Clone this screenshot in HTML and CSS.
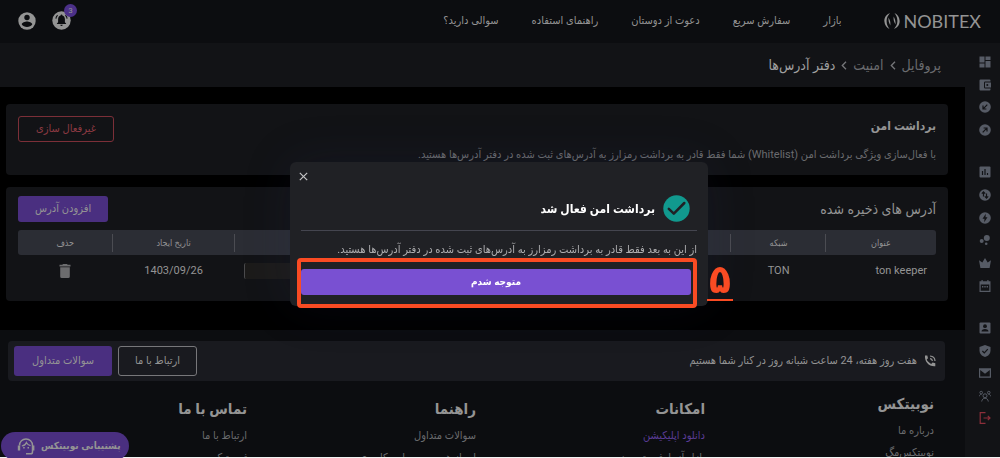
FILE: index.html
```html
<!DOCTYPE html>
<html lang="fa" dir="rtl">
<head>
  <meta charset="UTF-8" />
  <meta name="viewport" content="width=device-width, initial-scale=1.0"/>
  <title>نوبیتکس – دفتر آدرس‌ها</title>
  <link rel="stylesheet" href="styles.css">
</head>
<body>
  <header class="topbar">
    <a href="#" class="logo" dir="ltr">
      <svg width="16" height="16" viewBox="0 0 16 16" fill="currentColor">
        <path d="M6 0C2 1.500 0 5 .4 8.500.7 12 2.500 14.500 5.500 16 3.500 13.500 2.600 11 2.600 8 2.600 5 3.800 2.500 6 0zM4.500 4.500C6 7 6.800 9.500 6.300 12.500 5 10 4.200 7.500 4.500 4.500z"/>
        <path d="M10 16c4-1.500 6-5 5.600-8.500C15.300 4 13.500 1.500 10.500 0c2 2.500 2.900 5 2.900 8 0 3-1.200 5.500-3.400 8zM11.500 11.500C10 9 9.200 6.500 9.700 3.500c1.300 2.500 2.100 5 1.800 8z"/>
      </svg>
      <span>NOBITEX</span>
    </a>
    <nav class="main-nav">
      <a href="#">بازار</a>
      <a href="#">سفارش سریع</a>
      <a href="#">دعوت از دوستان</a>
      <a href="#">راهنمای استفاده</a>
      <a href="#">سوالی دارید؟</a>
    </nav>
    <div class="user-tools">
      <button class="icon-btn" aria-label="اعلان‌ها">
        <svg width="19" height="19" viewBox="0 0 19 19">
          <circle cx="9.500" cy="9.500" r="9.200" fill="#949494"/>
          <path d="M9.500 3.600c.6 0 .9.400.9.900 1.600.5 2.500 1.900 2.500 3.700v3l1.200 1.300v.6H4.900v-.6l1.200-1.300v-3c0-1.800.9-3.200 2.500-3.700 0-.5.3-.9.900-.9zM8.300 13.800h2.400a1.200 1.200 0 0 1-2.400 0z" fill="#0c0d10"/>
          <path d="M5.600 4.200C4.500 5.100 4 6.200 3.900 7.600M13.400 4.200c1.100.9 1.600 2 1.700 3.400" fill="none" stroke="#0c0d10" stroke-width="1.100"/>
        </svg>
        <span class="badge">3</span>
      </button>
      <button class="icon-btn" aria-label="حساب کاربری">
        <svg width="18" height="18" viewBox="0 0 18 18">
          <circle cx="9" cy="9" r="8.700" fill="#949494"/>
          <circle cx="9" cy="5.500" r="2.700" fill="#0c0d10"/>
          <path d="M3.700 12.300c0-1.900 3.500-2.900 5.300-2.900s5.300 1 5.300 2.900c-1.100 1.700-3.100 2.800-5.300 2.800s-4.200-1.100-5.300-2.800z" fill="#0c0d10"/>
        </svg>
      </button>
    </div>
  </header>

  <div class="layout">
    <aside class="sidebar">
      <div class="group short">
        <a href="#" aria-label="داشبورد"><svg viewBox="0 0 12 12"><path d="M.5.500h5v6h-5zM6.500.500h5v3.500h-5zM.5 7.500h5v4h-5zM6.500 5h5v6.500h-5z"/></svg></a>
        <a href="#" aria-label="کیف پول"><svg viewBox="0 0 12 12"><path d="M1.500.500h9q1 0 1 1v1H6.300Q5 2.500 5 3.800v4.400q0 1.300 1.300 1.300h5.200v1q0 1-1 1h-9q-1 0-1-1v-9q0-1 1-1zM6 3.500h6v5H6zM8.300 5a1 1 0 1 0 .01 2 1 1 0 0 0 0-2z" fill-rule="evenodd"/></svg></a>
        <a href="#" aria-label="واریز"><svg viewBox="0 0 12 12"><circle cx="6" cy="6" r="5.800"/><path class="cut" d="M8.300 3.700 4.200 7.800M4 4.600V8h3.400"/></svg></a>
        <a href="#" aria-label="برداشت"><svg viewBox="0 0 12 12"><circle cx="6" cy="6" r="5.800"/><path class="cut" d="M3.700 8.300 7.800 4.200M4.600 4H8v3.400"/></svg></a>
      </div>
      <div class="group long">
        <a href="#" aria-label="بازارها"><svg viewBox="0 0 12 12"><rect x=".5" y=".5" width="11" height="11" rx="1"/><path class="cut" d="M3.500 5v4M6 3v6M8.500 7v2"/></svg></a>
        <a href="#" aria-label="تبدیل"><svg viewBox="0 0 12 12"><circle cx="6" cy="6" r="5.800"/><path class="cut" d="M4.500 7.500V3M2.800 4.600l1.700-1.700 1.700 1.700M7.500 4.500V9M5.800 7.400l1.700 1.700 1.700-1.700"/></svg></a>
        <a href="#" aria-label="معامله سریع"><svg viewBox="0 0 12 12"><circle cx="6" cy="6" r="5.800"/><path d="M6.800 1.800 3.500 6.700h2L5.200 10.200 8.500 5.300h-2z" fill="#121316"/></svg></a>
        <a href="#" aria-label="استیکینگ"><svg viewBox="0 0 12 12"><circle cx="7.800" cy="4" r="3"/><circle cx="2.700" cy="7" r="2"/><circle cx="7.200" cy="9.800" r="1.300"/></svg></a>
        <a href="#" aria-label="سطح کاربری"><svg viewBox="0 0 12 12"><path d="M0 3.200 3.300 5.500 6 1l2.700 4.500L12 3.200 10.600 11H1.400z"/></svg></a>
        <a href="#" aria-label="تقویم"><svg viewBox="0 0 12 12"><path d="M2.500 0h1.200v1.300h4.600V0h1.200v1.300h2V12H.5V1.300h2zM1.700 4.500v6.300h8.600V4.500zM3 6h1.400v1.400H3zM5.300 6h1.400v1.400H5.300zM7.600 6H9v1.400H7.600z" fill-rule="evenodd"/></svg></a>
      </div>
      <div class="group medium">
        <a href="#" aria-label="پروفایل"><svg viewBox="0 0 12 12"><rect x=".5" y=".5" width="11" height="11" rx="1"/><circle cx="6" cy="4.200" r="1.900" fill="#121316"/><path d="M2.500 9.400c0-1.700 2.300-2.400 3.500-2.400s3.500.7 3.500 2.400z" fill="#121316"/></svg></a>
        <a href="#" aria-label="امنیت"><svg viewBox="0 0 12 12"><path d="M6 0l5.500 2v3.500C11.500 8.500 9.300 11.200 6 12 2.700 11.200.500 8.500.500 5.500V2z"/><path class="cut" d="M3.400 6l1.900 1.900 3.500-3.700"/></svg></a>
        <a href="#" aria-label="پیام‌ها"><svg viewBox="0 0 12 12"><path d="M0 1.200h12v9.600H0zM1.200 3v6.600h9.600V3L6 6.800z" fill-rule="evenodd"/><path d="M1.200 2h9.600L6 6z"/></svg></a>
        <a href="#" aria-label="دعوت"><svg viewBox="0 0 12 12"><g fill="none" stroke="#565b65" stroke-width="1"><circle cx="6" cy="5.800" r="2"/><circle cx="2.200" cy="2.600" r="1.300"/><circle cx="9.800" cy="2.600" r="1.300"/><path d="M2.700 11.500c.3-2 1.500-3.300 3.300-3.300s3 1.300 3.300 3.300M.3 6.300c.1-1.200.9-1.900 2.200-1.900M11.700 6.300c-.1-1.200-.9-1.900-2.200-1.900"/></g></svg></a>
        <a href="#" aria-label="خروج"><svg viewBox="0 0 12 12"><path d="M6.500.700H1.200v10.600h5.300M4.500 6h6.500M8.800 3.800 11 6 8.800 8.200" fill="none" stroke="#8c2f3a" stroke-width="1.200"/></svg></a>
      </div>
    </aside>

    <div class="page">
      <nav class="breadcrumb">
        <a href="#">پروفایل</a>
        <svg width="6" height="9" viewBox="0 0 6 9"><path d="M5 .8 1.300 4.500 5 8.200"/></svg>
        <a href="#">امنیت</a>
        <svg width="6" height="9" viewBox="0 0 6 9"><path d="M5 .8 1.300 4.500 5 8.200"/></svg>
        <span class="current">دفتر آدرس‌ها</span>
      </nav>

      <main>
        <section class="card secure">
          <div class="card-head">
            <h2>برداشت امن</h2>
            <button class="btn btn-danger">غیرفعال سازی</button>
          </div>
          <p>با فعال‌سازی ویژگی برداشت امن (Whitelist) شما فقط قادر به برداشت رمزارز به آدرس‌های ثبت شده در دفتر آدرس‌ها هستید.</p>
        </section>

        <section class="card addresses">
          <div class="card-head">
            <h2 class="light">آدرس های ذخیره شده</h2>
            <button class="btn btn-primary">افزودن آدرس</button>
          </div>
          <table>
            <thead>
              <tr>
                <th class="col-title">عنوان</th>
                <th class="col-net">شبکه</th>
                <th aria-label="آدرس"></th>
                <th class="col-date">تاریخ ایجاد</th>
                <th class="col-del">حذف</th>
              </tr>
            </thead>
            <tbody>
              <tr>
                <td class="name">ton keeper</td>
                <td>TON</td>
                <td class="address" dir="ltr"><span class="hidden-address"></span></td>
                <td>1403/09/26</td>
                <td>
                  <button class="icon-btn" aria-label="حذف">
                    <svg width="12" height="14" viewBox="0 0 12 14" fill="#6c6c6e"><path d="M4 0h4l.7.800H11.500v1.700H.500V.800h2.800zM1.200 3.300h9.600V12.500q0 1.500-1.500 1.500H2.700q-1.500 0-1.500-1.500z"/></svg>
                  </button>
                </td>
              </tr>
            </tbody>
          </table>
        </section>
      </main>

      <footer>
        <div class="help-bar">
          <svg width="12" height="12" viewBox="0 0 12 12"><path d="M1 .500h2.300l.7 2.700-1.300 1.300c.9 2 2.500 3.500 4.500 4.400l1.400-1.300 2.700.7V11.300C5 11.900.300 6.500 1 .500z" fill="#949494"/><path d="M6 3.600q2.200.2 2.400 2.400M6 1q4.800.3 5 5" fill="none" stroke="#949494" stroke-width="1.200"/></svg>
          <span>هفت روز هفته، 24 ساعت شبانه روز در کنار شما هستیم</span>
          <div class="help-actions">
            <button class="btn btn-outline">ارتباط با ما</button>
            <button class="btn btn-primary">سوالات متداول</button>
          </div>
        </div>
        <div class="footer-links">
          <div class="about">
            <h3>نوبیتکس</h3>
            <a href="#">درباره ما</a>
            <a href="#">نوبیتکس‌مگ</a>
          </div>
          <div>
            <h3>امکانات</h3>
            <a href="#" class="active">دانلود اپلیکیشن</a>
            <a href="#">بازار آزمایشی تست‌نت</a>
          </div>
          <div>
            <h3>راهنما</h3>
            <a href="#">سوالات متداول</a>
            <a href="#">احراز هویت و سطوح کاربری</a>
          </div>
          <div>
            <h3>تماس با ما</h3>
            <a href="#">ارتباط با ما</a>
            <a href="#">ثبت تیکت</a>
          </div>
        </div>
      </footer>
    </div>
  </div>

  <button class="support">
    <span>پشتیبانی نوبیتکس</span>
    <svg width="18" height="17" viewBox="0 0 18 17" fill="none" stroke="#949494" stroke-width="1.500">
      <path d="M2.500 7.500C2.500 3.500 5.500 1 9 1s6.500 2.500 6.500 6.500V14q0 1.800-1.800 1.800H9"/>
      <path d="M2 7.500v5M16.200 7.500v5" stroke-width="2.400"/>
      <path d="M4.800 8c2.700-.4 4-1.600 4.600-3.500.9 1.800 2.300 2.900 4.200 3.100" stroke-width="1.200"/>
      <path d="M6.200 9.800h1.500M10.500 9.800H12"/>
    </svg>
  </button>

  <div class="overlay">
    <div class="dialog" role="dialog" aria-labelledby="dialogTitle">
      <button class="close" aria-label="بستن">
        <svg width="9" height="9" viewBox="0 0 9 9"><path d="M.8.800l7.400 7.400M8.200.800.800 8.200" stroke="#c4c4c6" stroke-width="1.200"/></svg>
      </button>
      <div class="dialog-head">
        <svg width="27" height="27" viewBox="0 0 27 27"><circle cx="13.500" cy="13.500" r="13.200" fill="#11998e"/><path d="M5.800 13.800l5 4.800L21.300 8" fill="none" stroke="#202125" stroke-width="2.500" stroke-linecap="round" stroke-linejoin="round"/></svg>
        <h2 id="dialogTitle">برداشت امن فعال شد</h2>
      </div>
      <p>از این به بعد فقط قادر به برداشت رمزارز به آدرس‌های ثبت شده در دفتر آدرس‌ها هستید.</p>
      <button class="btn btn-confirm">متوجه شدم</button>
      <div class="marker"></div>
      <div class="step">۵</div>
    </div>
  </div>
</body>
</html>
```
FILE: styles.css
```css
:root {
  --bg-bar: #0c0d10;
  --bg-card: #121316;
  --bg-dialog: #202125;
  --text: #949494;
  --text-muted: #6a6b6e;
  --purple: #4a2f80;
  --marker: #fa4b23;
  --radius: 4px;
}
* { box-sizing: border-box; margin: 0; padding: 0; }
body {
  font-family: Roboto, "DejaVu Sans Condensed", "DejaVu Sans", sans-serif;
  font-size: 11px;
  line-height: 16px;
  background: #000;
  color: var(--text);
  height: 100vh;
  overflow: hidden;
  display: flex;
  flex-direction: column;
  border-bottom: 1px solid #f2f2f2;
}
a { color: inherit; text-decoration: none; }
button { font: inherit; color: inherit; cursor: pointer; }
svg { display: block; flex: none; }
.icon-btn {
  background: none;
  border: none;
  position: relative;
  display: inline-block;
}

.topbar {
  background: var(--bg-bar);
  height: 43px;
  flex: none;
  display: flex;
  align-items: center;
  padding: 0 19px 2px 18px;
}
.logo {
  display: flex;
  align-items: center;
  gap: 3px;
  font-family: Lato, sans-serif;
  font-size: 18px;
  line-height: 20px;
}
.main-nav {
  display: flex;
  gap: 33px;
  margin-right: 43px;
}
.user-tools {
  display: flex;
  align-items: center;
  gap: 16px;
  margin-right: auto;
}
.badge {
  position: absolute;
  top: -7px;
  right: -6px;
  width: 13px;
  height: 13px;
  border-radius: 50%;
  background: #4c3089;
  font-size: 8px;
  line-height: 13px;
  text-align: center;
}

.layout {
  flex: 1;
  min-height: 0;
  display: flex;
}
.sidebar {
  width: 35px;
  flex: none;
  background: var(--bg-card);
  padding: 13px 0 0 4px;
  display: flex;
  flex-direction: column;
  align-items: center;
  gap: 30px;
}
.sidebar .group {
  flex: none;
  display: flex;
  flex-direction: column;
  justify-content: space-between;
}
.sidebar .short { height: 80px; }
.sidebar .medium { height: 102px; }
.sidebar .long { height: 126px; }
.sidebar svg {
  width: 12px;
  height: 12px;
  fill: #565b65;
}
.sidebar .cut {
  fill: none;
  stroke: #121316;
  stroke-width: 1.2;
}

.page {
  flex: 1;
  min-width: 0;
  overflow: hidden;
}
.breadcrumb {
  height: 44px;
  background: var(--bg-card);
  display: flex;
  align-items: center;
  gap: 6px;
  padding-right: 24px;
  font-size: 14px;
  color: var(--text-muted);
}
.breadcrumb .current { color: #a0a0a0; }
.breadcrumb path {
  fill: none;
  stroke: #76777a;
  stroke-width: 1.3;
}

main {
  padding: 17px 17px 29px 6px;
  display: grid;
  gap: 12px;
}
.card {
  background: var(--bg-card);
  border-radius: var(--radius);
  padding: 12px;
}
.card-head {
  display: flex;
  justify-content: space-between;
}
.card h2 {
  font-size: 12px;
  line-height: 20px;
}
.card h2.light {
  font-size: 14px;
  font-weight: normal;
  line-height: 26px;
}
.card p { color: var(--text-muted); }
.secure { height: 71px; }
.secure p { margin-top: 5px; }
.addresses { padding-top: 9px; height: 114px; }

.btn {
  height: 26px;
  padding: 0 17px;
  border: none;
  border-radius: 3px;
}
.btn-danger {
  background: none;
  border: 1px solid #7c2f38;
  color: #8c3a42;
}
.btn-primary { background: var(--purple); }
.btn-outline {
  background: none;
  border: 1px solid #77777a;
}

table {
  width: 100%;
  margin-top: 8px;
  table-layout: fixed;
  border-collapse: separate;
  border-spacing: 0;
  text-align: center;
}
th {
  height: 25px;
  background: #2b2d34;
  font-size: 9px;
  font-weight: normal;
}
th + th {
  background-image: linear-gradient(#4b4c52, #4b4c52);
  background-size: 1px 18px;
  background-position: right center;
  background-repeat: no-repeat;
}
th:first-child { border-radius: 0 3px 3px 0; }
th:last-child { border-radius: 3px 0 0 3px; }
.col-title { width: 12%; }
.col-net, .col-del { width: 10.3%; }
.col-date { width: 13.3%; }
td {
  height: 32px;
  font-size: 11px;
  vertical-align: middle;
}
td.name {
  text-align: right;
  padding-right: 9px;
}
td.address {
  text-align: left;
  padding-left: 9px;
}
td .icon-btn { vertical-align: middle; }
.hidden-address {
  display: block;
  width: 120px;
  height: 16px;
  border-left: 1px solid #4a4a4c;
  border-radius: 2px;
  background: #1c1b1a;
}

footer {
  background: var(--bg-bar);
  padding: 11px 20px 20px 8px;
}
.help-bar {
  height: 40px;
  background: #191a1f;
  border-radius: var(--radius);
  display: flex;
  align-items: center;
  gap: 7px;
  padding: 0 9px 0 6px;
}
.help-actions {
  display: flex;
  gap: 6px;
  margin-right: auto;
}
.help-actions .btn { height: 30px; }
.help-actions .btn-primary { padding: 0 18px; }
.help-actions .btn-outline { padding: 0 16px; }
.footer-links {
  display: grid;
  grid-template-columns: repeat(4, 1fr);
  padding: 13px 11px 0 10px;
}
.footer-links div {
  display: flex;
  flex-direction: column;
  align-items: flex-start;
  gap: 6px;
  color: var(--text-muted);
}
.footer-links div + div { padding-top: 5px; }
.footer-links h3 {
  margin-bottom: 3px;
  font-size: 15px;
  line-height: 20px;
  color: var(--text);
}
.footer-links .active { color: #5a3c96; }

.support {
  position: fixed;
  left: 1px;
  bottom: -2px;
  height: 28px;
  padding: 0 8px 0 16px;
  border: none;
  border-radius: 14px;
  background: var(--purple);
  font-size: 10px;
  font-weight: bold;
  display: flex;
  align-items: center;
  gap: 6px;
}

.overlay {
  position: fixed;
  inset: 0;
  padding: 10px 2px 0 0;
  display: grid;
  place-items: center;
}
.dialog {
  position: relative;
  width: 418px;
  padding: 33px 11px 11px;
  border-radius: 6px;
  background: var(--bg-dialog);
  box-shadow: 0 0 50px rgba(40, 50, 100, 0.15);
}
.close {
  position: absolute;
  top: 10px;
  left: 9px;
  background: none;
  border: none;
}
.dialog-head {
  display: flex;
  align-items: center;
  gap: 8px;
  padding: 0 7px 8px 0;
  border-bottom: 1px solid #44454f;
}
.dialog-head h2 {
  font-size: 12px;
  line-height: 20px;
  color: #fff;
}
.dialog p {
  margin: 11px 0;
  color: #aeaeb0;
  white-space: nowrap;
}
.btn-confirm {
  display: block;
  width: 390px;
  margin-right: 6px;
  background: #7950d2;
  color: #fff;
  font-size: 10px;
  font-weight: bold;
}
.marker {
  position: absolute;
  top: 96px;
  left: 7px;
  width: 400px;
  height: 50px;
  border: 4px solid var(--marker);
  border-radius: var(--radius);
}
.step {
  position: absolute;
  left: 417px;
  bottom: 5px;
  width: 26px;
  border-bottom: 2px solid var(--marker);
  color: var(--marker);
  font-size: 40px;
  font-weight: bold;
  line-height: 38px;
  text-align: center;
}
```
